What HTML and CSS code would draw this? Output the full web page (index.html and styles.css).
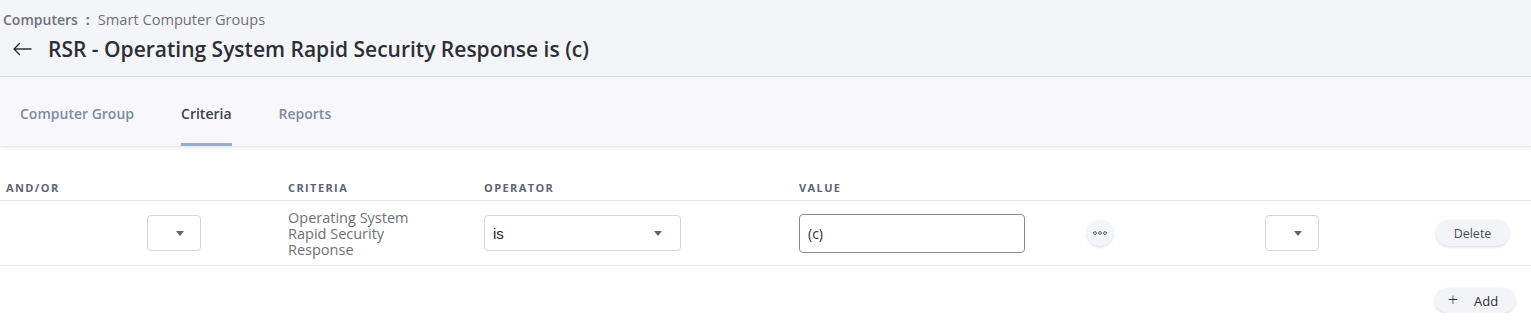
FILE: index.html
```html
<!DOCTYPE html>
<html lang="en">
<head>
    <meta charset="UTF-8">
    <meta name="viewport" content="width=device-width, initial-scale=1.0">
    <title>Smart Computer Group Criteria</title>
    <link rel="stylesheet" href="styles.css">
</head>
<body>
    <!-- Page header with breadcrumb and title -->
    <div class="page-header">
        <div class="breadcrumb">
            <span class="crumb-root">Computers</span>
            <span class="crumb-sep">:</span>
            <span class="crumb-page">Smart Computer Groups</span>
        </div>
        <div class="title-row">
            <span class="back-arrow">
                <svg width="20" height="14" viewBox="0 0 20 14">
                    <path d="M19 7H2M7.5 1.5L2 7l5.5 5.5" fill="none" stroke="#2d2f33" stroke-width="1.4" stroke-linecap="round" stroke-linejoin="round"/>
                </svg>
            </span>
            <h1>RSR - Operating System Rapid Security Response is (c)</h1>
        </div>
    </div>

    <!-- Tabs -->
    <div class="tabs">
        <a class="tab">Computer Group</a>
        <a class="tab active">Criteria</a>
        <a class="tab">Reports</a>
    </div>

    <!-- Criteria table -->
    <div class="criteria">
        <div class="grid head">
            <div class="and-or">AND/OR</div>
            <div></div>
            <div>Criteria</div>
            <div>Operator</div>
            <div>Value</div>
            <div></div>
            <div></div>
            <div></div>
        </div>
        <div class="grid row">
            <div></div>
            <div><div class="select small"><span class="caret"></span></div></div>
            <div class="criteria-name">
                <div>Operating System</div>
                <div>Rapid Security</div>
                <div>Response</div>
            </div>
            <div><div class="select wide"><span class="select-text">is</span><span class="caret"></span></div></div>
            <div><div class="value-input">(c)</div></div>
            <div><button class="dots">
                <svg width="14" height="4" viewBox="0 0 14 4">
                    <circle cx="2" cy="2" r="1.4" fill="none" stroke="#555" stroke-width="0.9"/>
                    <circle cx="7" cy="2" r="1.4" fill="none" stroke="#555" stroke-width="0.9"/>
                    <circle cx="12" cy="2" r="1.4" fill="none" stroke="#555" stroke-width="0.9"/>
                </svg>
            </button></div>
            <div><div class="select small"><span class="caret"></span></div></div>
            <div><button class="pill">Delete</button></div>
        </div>
        <div class="actions">
            <button class="pill add"><span class="plus">+</span>Add</button>
        </div>
    </div>
</body>
</html>
```

FILE: styles.css
```css
/* General body styling */
body {
    font-family: "Open Sans", Lato, sans-serif;
    background-color: #ffffff;
    color: #2d2f33;
    margin: 0;
    padding: 0;
}

/* Header with breadcrumb */
.page-header {
    background-color: #f4f5f9;
    height: 77px;
    border-bottom: 1px solid #d9dbe3;
    box-sizing: border-box;
    padding-top: 9px;
}

.breadcrumb {
    font-size: 14px;
    color: #6e7178;
    padding-left: 3px;
    height: 20px;
    display: flex;
    align-items: center;
}

.crumb-root {
    font-weight: 600;
}

.crumb-sep {
    margin: 0 8px 0 8px;
    font-weight: 700;
}

.crumb-page {
    font-size: 14.6px;
}

.title-row {
    display: flex;
    align-items: center;
    margin-top: 7px;
    height: 26px;
}

.back-arrow {
    display: flex;
    width: 20px;
    margin: 0 16px 0 12px;
}

h1 {
    font-size: 21px;
    font-weight: 600;
    margin: 0;
    color: #2d2f33;
}

/* Tabs */
.tabs {
    background-color: #f8f8fa;
    height: 70px;
    display: flex;
    align-items: stretch;
    padding-left: 20px;
    gap: 47px;
    box-shadow: 0 2px 3px rgba(0, 0, 0, 0.06);
    border-bottom: 1px solid #ececef;
    box-sizing: border-box;
}

.tab {
    font-size: 14px;
    font-weight: 600;
    color: #7d8aa6;
    display: flex;
    align-items: center;
    padding-top: 6px;
    border-bottom: 3px solid transparent;
    cursor: pointer;
}

.tab.active {
    color: #3d414b;
    border-bottom-color: #9aaccb;
}

/* Criteria table */
.criteria {
    padding-top: 28px;
}

.grid {
    display: grid;
    grid-template-columns: 147px 141px 196px 315px 288px 178px 171px 1fr;
    align-items: center;
}

.head {
    font-size: 11px;
    font-weight: 700;
    letter-spacing: 1.4px;
    text-transform: uppercase;
    color: #5d6579;
    height: 25px;
    border-bottom: 1px solid #e6e7ea;
}

.and-or {
    padding-left: 6px;
}

.row {
    height: 65px;
    border-bottom: 1px solid #e6e7ea;
    box-sizing: border-box;
}

.criteria-name {
    font-size: 14.5px;
    line-height: 16px;
    color: #6e7178;
    padding-top: 1px;
}

.select {
    height: 36px;
    border: 1px solid #d4d6db;
    border-radius: 4px;
    box-sizing: border-box;
    display: flex;
    align-items: center;
    justify-content: flex-end;
    background-color: #ffffff;
}

.select.small {
    width: 54px;
    padding-right: 16px;
}

.select.wide {
    width: 197px;
    padding: 0 18px 0 8px;
    justify-content: space-between;
}

.select-text {
    font-family: "Liberation Sans", Arial, sans-serif;
    font-size: 15px;
    color: #222222;
}

.caret {
    width: 0;
    height: 0;
    border-left: 4px solid transparent;
    border-right: 4px solid transparent;
    border-top: 5px solid #5d6579;
}

.value-input {
    width: 226px;
    height: 39px;
    border: 1px solid #8a8b8f;
    border-radius: 4px;
    box-sizing: border-box;
    font-size: 14px;
    color: #2d2f33;
    display: flex;
    align-items: center;
    padding-left: 8px;
}

.dots {
    width: 26px;
    height: 26px;
    border-radius: 50%;
    border: none;
    background-color: #f4f5f8;
    box-shadow: 0 1px 3px rgba(0, 0, 0, 0.15);
    display: flex;
    align-items: center;
    justify-content: center;
    padding: 0;
    cursor: pointer;
}

/* Pill buttons */
.pill {
    font-family: "Open Sans", Lato, sans-serif;
    font-size: 12.5px;
    color: #4a4d54;
    background-color: #f3f4f8;
    border: none;
    border-radius: 13px;
    height: 26px;
    width: 73px;
    box-shadow: 0 1px 3px rgba(0, 0, 0, 0.15);
    cursor: pointer;
}

.actions {
    display: flex;
    justify-content: flex-end;
    padding: 22px 16px 0 0;
}

.pill.add {
    width: 80px;
    height: 25px;
    font-size: 13px;
    color: #2d2f33;
    display: flex;
    align-items: center;
    justify-content: center;
    gap: 16px;
    padding: 0 4px 0 0;
}

.plus {
    font-size: 18px;
    font-weight: 300;
    line-height: 1;
    margin-top: -3px;
}
```
